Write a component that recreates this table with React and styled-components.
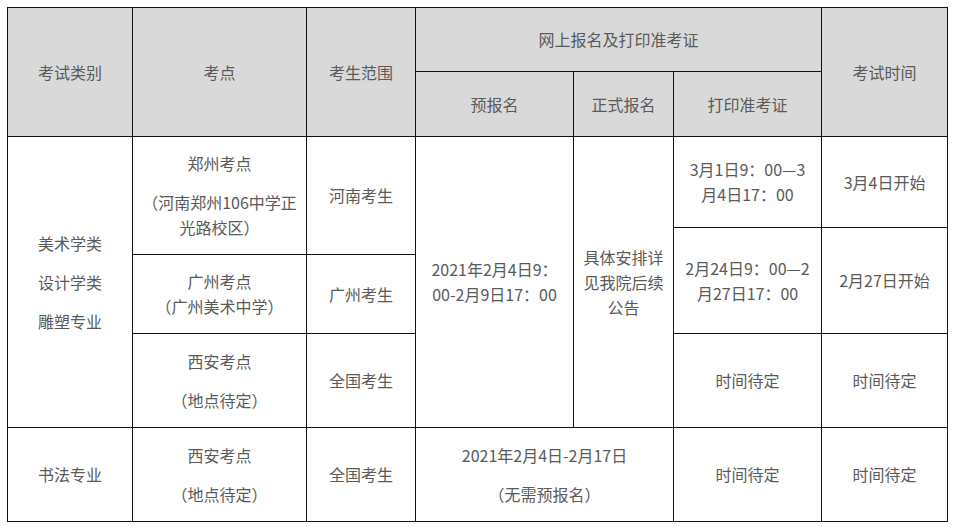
import React from "react";
import styled, { createGlobalStyle } from "styled-components";

const Global = createGlobalStyle`
  html, body {
    margin: 0;
    padding: 0;
    background: #ffffff;
  }
  body {
    font-family: "Microsoft YaHei", "Noto Sans CJK SC", "Noto Sans", sans-serif;
  }
`;

const Page = styled.div`
  padding: 7px 0 0 7px;
`;

const Table = styled.table`
  width: 940px;
  table-layout: fixed;
  border-collapse: collapse;
  color: #5a5a5a;
  font-size: 16px;
  line-height: 25px;
`;

const Col = styled.col`
  width: ${(p) => p.$w}px;
`;

const Row = styled.tr`
  height: ${(p) => p.$h}px;
`;

const Cell = styled.td`
  border: 1px solid #111;
  padding: 0 4px;
  text-align: center;
  vertical-align: middle;
  white-space: nowrap;
  font-weight: normal;
  background: ${(p) => (p.$head ? "#d9d9d9" : "#ffffff")};
`;

const Para = styled.p`
  margin: 0;
  & + & {
    margin-top: 14px;
  }
`;

const cols = [125, 174, 109, 158, 100, 148, 126];

export default function App() {
  return (
    <Page>
      <Global />
      <Table>
        <colgroup>
          {cols.map((w, i) => (
            <Col key={i} $w={w} />
          ))}
        </colgroup>
        <tbody>
          <Row $h={64}>
            <Cell as="th" $head rowSpan={2}>考试类别</Cell>
            <Cell as="th" $head rowSpan={2}>考点</Cell>
            <Cell as="th" $head rowSpan={2}>考生范围</Cell>
            <Cell as="th" $head colSpan={3}>网上报名及打印准考证</Cell>
            <Cell as="th" $head rowSpan={2}>考试时间</Cell>
          </Row>
          <Row $h={65}>
            <Cell as="th" $head>预报名</Cell>
            <Cell as="th" $head>正式报名</Cell>
            <Cell as="th" $head>打印准考证</Cell>
          </Row>
          <Row $h={91}>
            <Cell rowSpan={4}>
              <Para>美术学类</Para>
              <Para>设计学类</Para>
              <Para>雕塑专业</Para>
            </Cell>
            <Cell rowSpan={2}>
              <Para>郑州考点</Para>
              <Para>
                （河南郑州106中学正
                <br />
                光路校区）
              </Para>
            </Cell>
            <Cell rowSpan={2}>河南考生</Cell>
            <Cell rowSpan={4}>
              2021年2月4日9：
              <br />
              00-2月9日17：00
            </Cell>
            <Cell rowSpan={4}>
              具体安排详
              <br />
              见我院后续
              <br />
              公告
            </Cell>
            <Cell>
              3月1日9：00—3
              <br />
              月4日17：00
            </Cell>
            <Cell>3月4日开始</Cell>
          </Row>
          <Row $h={27}>
            <Cell rowSpan={2}>
              2月24日9：00—2
              <br />
              月27日17：00
            </Cell>
            <Cell rowSpan={2}>2月27日开始</Cell>
          </Row>
          <Row $h={79}>
            <Cell>
              广州考点
              <br />
              （广州美术中学）
            </Cell>
            <Cell>广州考生</Cell>
          </Row>
          <Row $h={94}>
            <Cell>
              <Para>西安考点</Para>
              <Para>（地点待定）</Para>
            </Cell>
            <Cell>全国考生</Cell>
            <Cell>时间待定</Cell>
            <Cell>时间待定</Cell>
          </Row>
          <Row $h={94}>
            <Cell>书法专业</Cell>
            <Cell>
              <Para>西安考点</Para>
              <Para>（地点待定）</Para>
            </Cell>
            <Cell>全国考生</Cell>
            <Cell colSpan={2}>
              <Para>2021年2月4日-2月17日</Para>
              <Para>（无需预报名）</Para>
            </Cell>
            <Cell>时间待定</Cell>
            <Cell>时间待定</Cell>
          </Row>
        </tbody>
      </Table>
    </Page>
  );
}
